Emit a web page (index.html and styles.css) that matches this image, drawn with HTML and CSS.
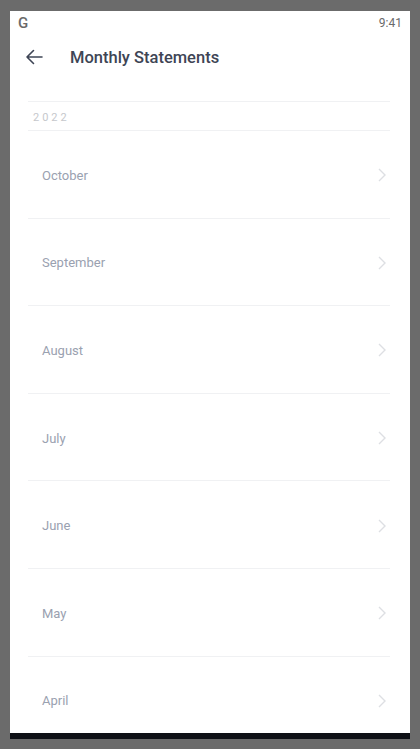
FILE: index.html
```html
<!DOCTYPE html>
<html lang="en">
<head>
  <meta charset="UTF-8">
  <meta name="viewport" content="width=device-width, initial-scale=1.0">
  <title>Monthly Statements</title>
  <link rel="stylesheet" href="styles.css">
</head>
<body>
  <div class="frame">
    <div class="screen">
      <div class="status">
        <span class="g">G</span>
        <span class="time">9:41</span>
      </div>

      <header>
        <svg class="back" width="18" height="16" viewBox="0 0 18 16">
          <path d="M17 8H2M8.5 1.5L2 8l6.5 6.5" fill="none" stroke="#3e4555" stroke-width="1.6" stroke-linecap="round" stroke-linejoin="round"/>
        </svg>
        <h1>Monthly Statements</h1>
      </header>

      <div class="list">
        <div class="year">2022</div>
        <div class="row"><span>October</span><svg class="chev" width="8" height="14" viewBox="0 0 8 14"><path d="M1 1l6 6-6 6" fill="none" stroke="#dddfe3" stroke-width="1.4"/></svg></div>
        <div class="row"><span>September</span><svg class="chev" width="8" height="14" viewBox="0 0 8 14"><path d="M1 1l6 6-6 6" fill="none" stroke="#dddfe3" stroke-width="1.4"/></svg></div>
        <div class="row"><span>August</span><svg class="chev" width="8" height="14" viewBox="0 0 8 14"><path d="M1 1l6 6-6 6" fill="none" stroke="#dddfe3" stroke-width="1.4"/></svg></div>
        <div class="row"><span>July</span><svg class="chev" width="8" height="14" viewBox="0 0 8 14"><path d="M1 1l6 6-6 6" fill="none" stroke="#dddfe3" stroke-width="1.4"/></svg></div>
        <div class="row"><span>June</span><svg class="chev" width="8" height="14" viewBox="0 0 8 14"><path d="M1 1l6 6-6 6" fill="none" stroke="#dddfe3" stroke-width="1.4"/></svg></div>
        <div class="row"><span>May</span><svg class="chev" width="8" height="14" viewBox="0 0 8 14"><path d="M1 1l6 6-6 6" fill="none" stroke="#dddfe3" stroke-width="1.4"/></svg></div>
        <div class="row"><span>April</span><svg class="chev" width="8" height="14" viewBox="0 0 8 14"><path d="M1 1l6 6-6 6" fill="none" stroke="#dddfe3" stroke-width="1.4"/></svg></div>
      </div>
    </div>
    <div class="navbar"></div>
  </div>
</body>
</html>
```

FILE: styles.css
```css
body {
  margin: 0;
  font-family: Roboto, "Liberation Sans", sans-serif;
  background-color: #6b6b6b;
}
.frame {
  padding: 11px 10px 10px;
}
.screen {
  height: 722px;
  background: #fff;
  overflow: hidden;
}
.navbar {
  height: 6px;
  background: #0f1116;
}
.status {
  height: 24px;
  display: flex;
  align-items: center;
  justify-content: space-between;
  padding: 0 8px;
  color: #6a6a6a;
}
.g {
  font-size: 15px;
  font-weight: 500;
}
.time {
  font-size: 12px;
}
header {
  height: 44px;
  display: flex;
  align-items: center;
  padding-left: 15px;
}
.back {
  display: block;
}
h1 {
  margin: 0 0 0 27px;
  font-size: 16.5px;
  font-weight: 500;
  color: #3e4555;
}
.list {
  margin: 22px 20px 0 18px;
}
.year {
  height: 30px;
  line-height: 31px;
  box-sizing: border-box;
  border-top: 1px solid #f0f1f3;
  border-bottom: 1px solid #f0f1f3;
  padding-left: 5px;
  font-size: 11px;
  letter-spacing: 3px;
  color: #c6c8cc;
}
.row {
  height: 87.6px;
  box-sizing: border-box;
  border-bottom: 1px solid #f0f1f3;
  display: flex;
  align-items: center;
  justify-content: space-between;
  padding: 2px 4px 0 14px;
  font-size: 13px;
  color: #9aa1b0;
}
```
